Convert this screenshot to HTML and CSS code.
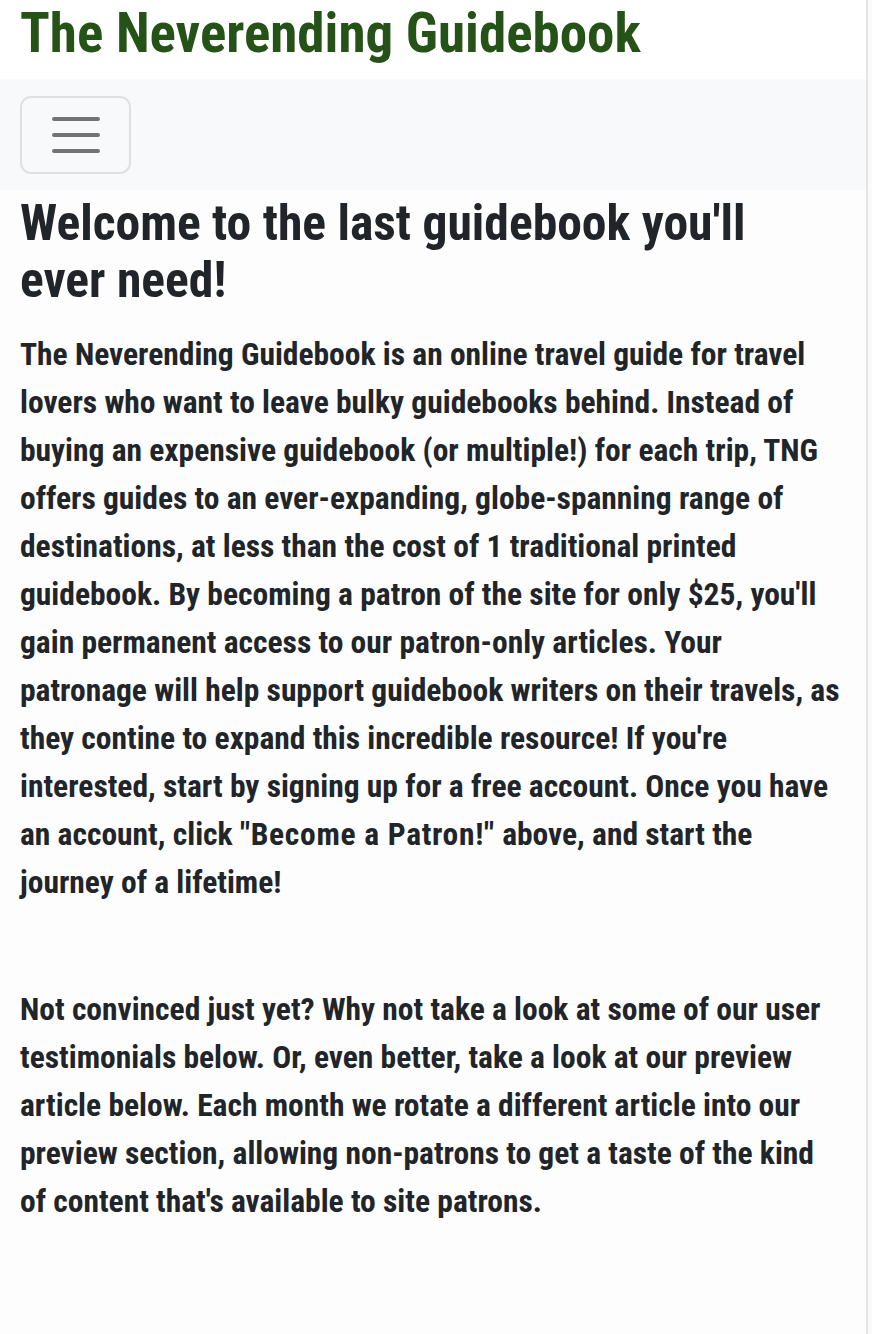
FILE: index.html
```html
<!DOCTYPE html>
<html lang="en">
<head>
<meta charset="utf-8">
<title>The Neverending Guidebook</title>
<link rel="stylesheet" href="styles.css">
</head>
<body>
<div class="page">
  <div class="main">
    <header class="brand">
      <h1 class="brand-title">The Neverending Guidebook</h1>
    </header>
    <nav class="navbar">
      <button class="toggler" type="button" aria-label="Toggle navigation">
        <svg class="toggler-icon" width="48" height="36" viewBox="0 0 48 36" aria-hidden="true">
          <path d="M2 2H46M2 18H46M2 34H46" stroke="#727374" stroke-width="4" stroke-linecap="round" fill="none"/>
        </svg>
      </button>
    </nav>
    <main class="content">
      <h2 class="welcome">Welcome to the last guidebook you'll ever need!</h2>
      <p class="intro">The Neverending Guidebook is an online travel guide for travel lovers who want to leave bulky guidebooks behind. Instead of buying an expensive guidebook (or multiple!) for each trip, TNG offers guides to an ever-expanding, globe-spanning range of destinations, at less than the cost of 1 traditional printed guidebook. By becoming a patron of the site for only $25, you'll gain permanent access to our patron-only articles. Your patronage will help support guidebook writers on their travels, as they contine to expand this incredible resource! If you're interested, start by signing up for a free account. Once you have an account, click <span class="cta-name">"Become a Patron!"</span> above, and start the journey of a lifetime!</p>
      <p class="intro">Not convinced just yet? Why not take a look at some of our user testimonials below. Or, even better, take a look at our preview article below. Each month we rotate a different article into our preview section, allowing non-patrons to get a taste of the kind of content that's available to site patrons.</p>
    </main>
  </div>
  <div class="rail"></div>
</div>
</body>
</html>
```
FILE: styles.css
```css
* { box-sizing: border-box; }

html, body {
  margin: 0;
  padding: 0;
  background: #ffffff;
}

body {
  font-family: "Roboto Condensed", "Open Sans", sans-serif;
  font-weight: 700;
  color: #212529;
}

.page {
  display: flex;
  min-height: 1334px;
}

.main {
  flex: 1;
  min-width: 0;
  background: #fdfdfd;
}

.rail {
  width: 6px;
  flex: none;
  border-left: 2px solid #e4e4e4;
  background: #fafafa;
}

.brand {
  background: #ffffff;
  height: 79px;
  padding: 0 20px;
}

.brand-title {
  margin: 0;
  font-size: 55px;
  line-height: 67px;
  font-weight: 700;
  color: #255217;
  white-space: nowrap;
}

.navbar {
  background: #f8f9fa;
  height: 111px;
  padding: 17px 20px 16px;
  display: flex;
  align-items: flex-start;
}

.toggler {
  width: 111px;
  height: 78px;
  border: 2px solid #dfe0e1;
  border-radius: 11px;
  background: transparent;
  padding: 0;
  display: flex;
  align-items: center;
  justify-content: center;
}

.toggler-icon {
  display: block;
}

.content {
  padding: 5px 20px 0;
}

.welcome {
  margin: 0 0 22px;
  max-width: 790px;
  font-size: 49.6px;
  line-height: 57px;
  font-weight: 700;
}

.intro {
  margin: 0 0 79px;
  font-size: 31.5px;
  line-height: 48px;
}

.cta-name {
  letter-spacing: 0.7px;
}
```
